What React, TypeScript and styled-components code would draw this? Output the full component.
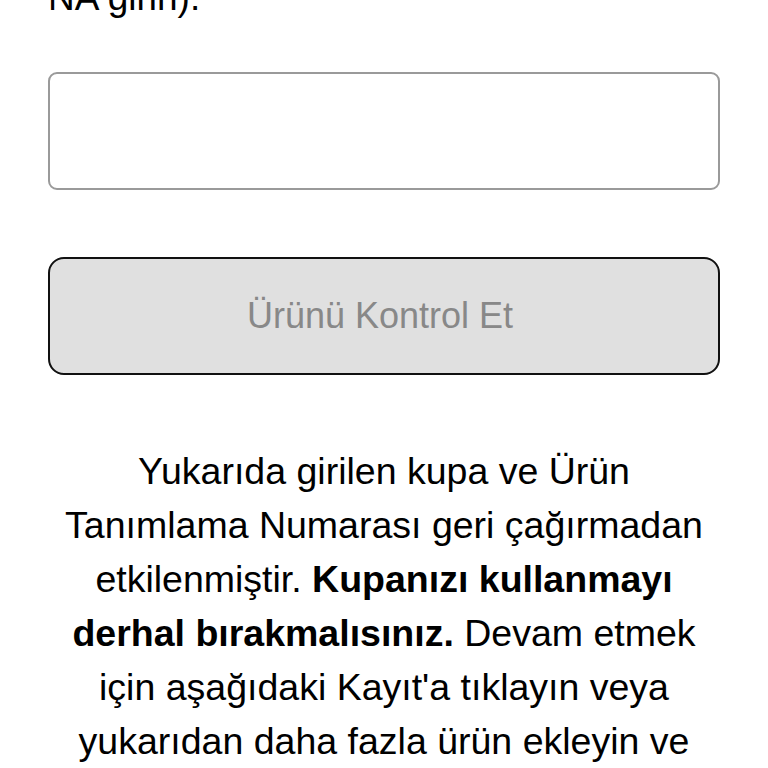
import React from "react";
import styled, { createGlobalStyle } from "styled-components";

const Global = createGlobalStyle`
  html, body { margin: 0; padding: 0; background: #ffffff; }
  body { font-family: "Liberation Sans", Arial, Helvetica, sans-serif; color: #000; overflow: hidden; }
`;

const Page = styled.div`
  margin-top: -83px;
  padding: 0 48px;
  display: flex;
  flex-direction: column;
`;

const Label = styled.label`
  font-size: 37px;
  line-height: 54px;
  color: #000;
  display: block;
`;

const Input = styled.input`
  box-sizing: border-box;
  margin-top: 47px;
  width: 100%;
  height: 118px;
  border: 2px solid #9a9a9a;
  border-radius: 9px;
  background: #fff;
  font-size: 36px;
  font-family: inherit;
  padding: 0 20px;
  outline: none;
`;

const Button = styled.button`
  box-sizing: border-box;
  margin-top: 67px;
  width: 100%;
  height: 118px;
  border: 2px solid #111;
  border-radius: 16px;
  background: #e0e0e0;
  color: #888888;
  font-size: 36px;
  font-family: inherit;
  padding: 0 8px 0 0;
  cursor: default;
`;

const Message = styled.p`
  margin: 69px 0 0;
  text-align: center;
  font-size: 37.5px;
  line-height: 54px;
  color: #000;
`;

const Strong = styled.strong`
  font-weight: 700;
`;

export default function App() {
  return (
    <>
      <Global />
      <Page>
        <Label htmlFor="pin">
          Ürün Tanımlama Numarasını girin (veya
          <br />
          NA girin).
        </Label>
        <Input id="pin" type="text" />
        <Button type="button" disabled>
          Ürünü Kontrol Et
        </Button>
        <Message>
          Yukarıda girilen kupa ve Ürün Tanımlama Numarası geri çağırmadan
          etkilenmiştir. <Strong>Kupanızı kullanmayı derhal bırakmalısınız.</Strong>{" "}
          Devam etmek için aşağıdaki Kayıt'a tıklayın veya yukarıdan daha fazla
          ürün ekleyin ve Ürünü Kontrol Et'e tıklayın.
        </Message>
      </Page>
    </>
  );
}
